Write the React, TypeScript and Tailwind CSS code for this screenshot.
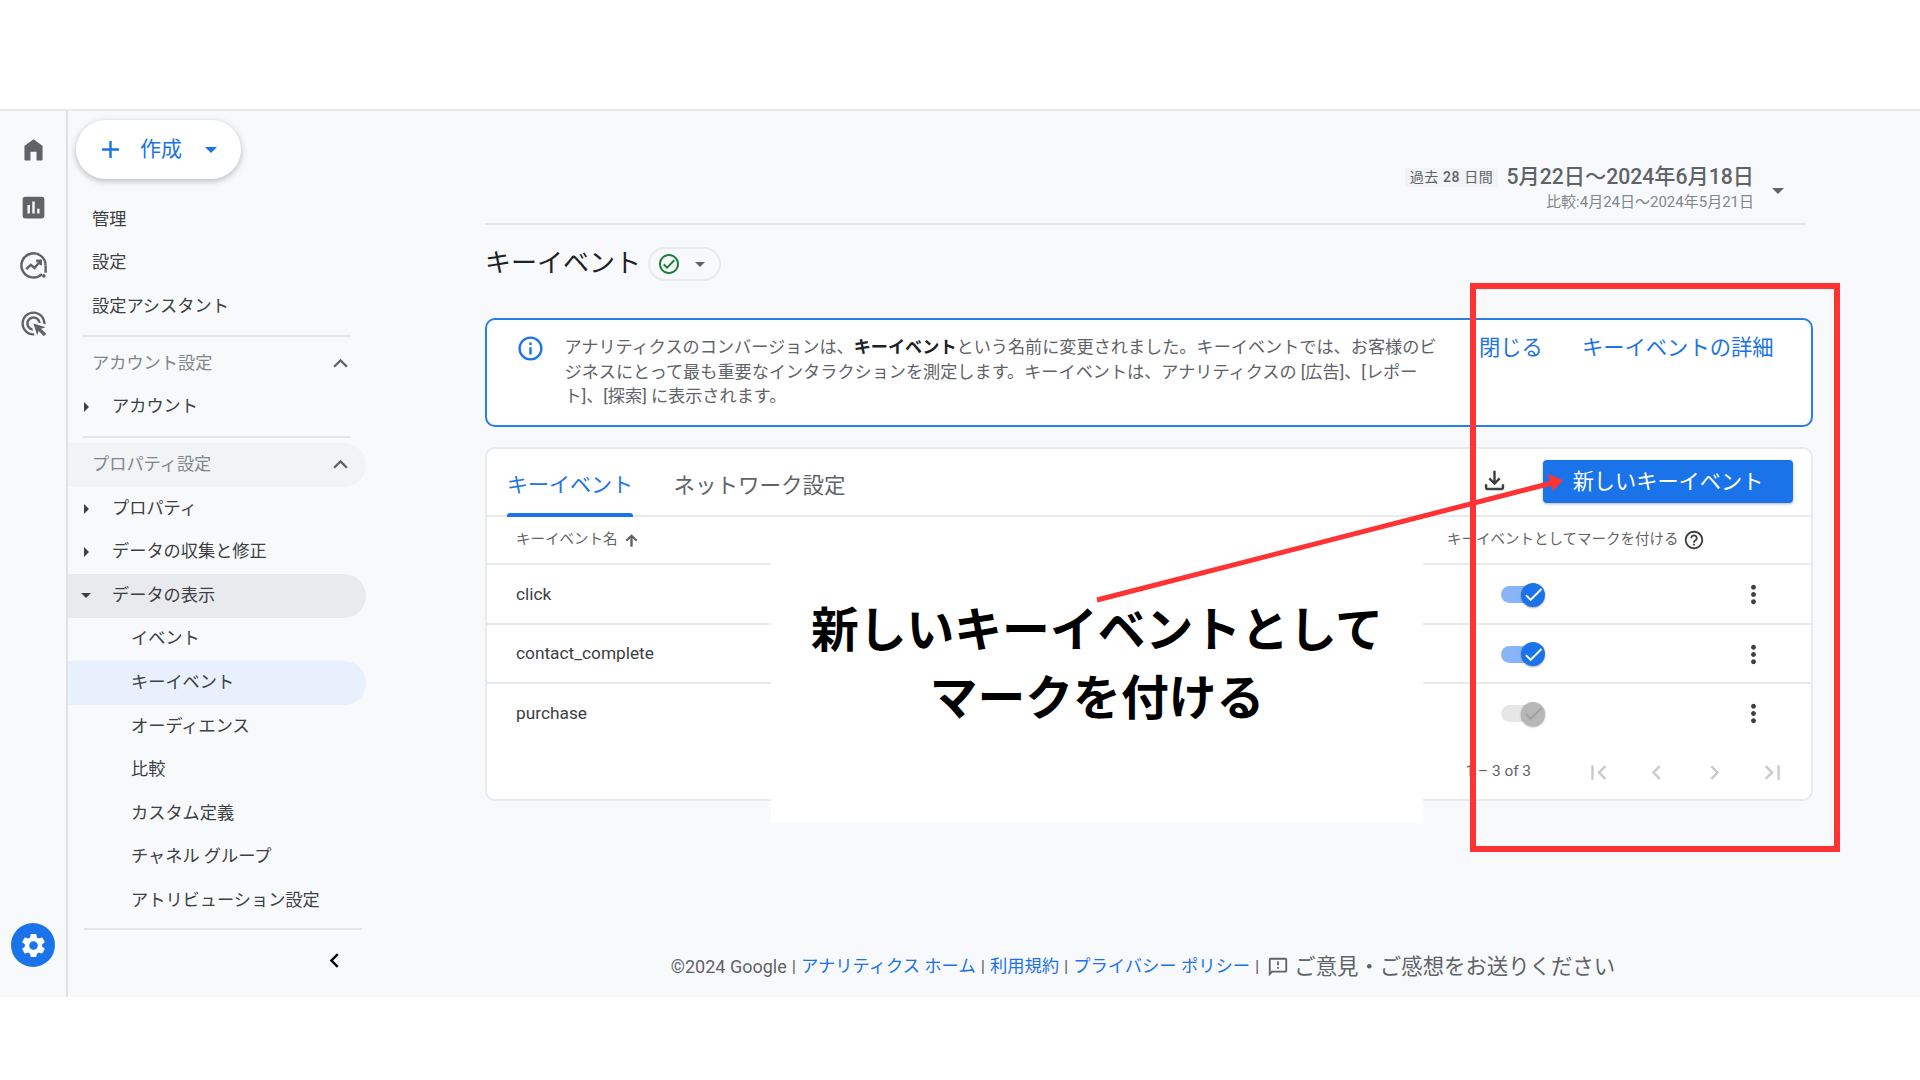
import React from 'react';

const P = {
  home: 'M4.5 20.2V9.4c0-.3.1-.5.4-.7L11.4 3.9c.4-.3.8-.3 1.2 0l6.5 4.8c.3.2.4.4.4.7v10.8c0 .4-.3.8-.8.8h-4.2v-7.2h-5V21H5.3c-.5 0-.8-.4-.8-.8z',
  bars: 'M19 3H5c-1.1 0-2 .9-2 2v14c0 1.1.9 2 2 2h14c1.1 0 2-.9 2-2V5c0-1.1-.9-2-2-2zM9 17H7v-7h2v7zm4 0h-2V7h2v10zm4 0h-2v-4h2v4z',
  ads: 'M11.71 17.99C8.53 17.84 6 15.22 6 12c0-3.31 2.69-6 6-6 3.22 0 5.84 2.53 5.99 5.71l-2.1-.63C15.48 9.31 13.89 8 12 8c-2.21 0-4 1.79-4 4 0 1.89 1.31 3.48 3.08 3.89l.63 2.1zM22 12c0 .3-.01.6-.04.9l-1.97-.59c.01-.1.01-.21.01-.31 0-4.42-3.58-8-8-8s-8 3.58-8 8 3.58 8 8 8c.1 0 .21 0 .31-.01l.59 1.97c-.3.03-.6.04-.9.04-5.52 0-10-4.48-10-10S6.48 2 12 2s10 4.48 10 10zm-3.77 4.26L22 15l-10-3 3 10 1.26-3.77 4.27 4.27 1.98-1.98-4.28-4.26z',
  gear: 'M19.14 12.94c.04-.3.06-.61.06-.94 0-.32-.02-.64-.07-.94l2.03-1.58c.18-.14.23-.41.12-.61l-1.92-3.32c-.12-.22-.37-.29-.59-.22l-2.39.96c-.5-.38-1.03-.7-1.62-.94l-.36-2.54c-.04-.24-.24-.41-.48-.41h-3.84c-.24 0-.43.17-.47.41l-.36 2.54c-.59.24-1.13.57-1.62.94l-2.39-.96c-.22-.08-.47 0-.59.22L2.74 8.87c-.12.21-.08.47.12.61l2.03 1.58c-.05.3-.09.63-.09.94s.02.64.07.94l-2.03 1.58c-.18.14-.23.41-.12.61l1.92 3.32c.12.22.37.29.59.22l2.39-.96c.5.38 1.03.7 1.62.94l.36 2.54c.05.24.24.41.48.41h3.84c.24 0 .44-.17.47-.41l.36-2.54c.59-.24 1.13-.56 1.62-.94l2.39.96c.22.08.47 0 .59-.22l1.92-3.32c.12-.22.07-.47-.12-.61l-2.01-1.58zM12 15.6c-1.98 0-3.6-1.62-3.6-3.6s1.62-3.6 3.6-3.6 3.6 1.62 3.6 3.6-1.62 3.6-3.6 3.6z',
  plus: 'M19 13h-6v6h-2v-6H5v-2h6V5h2v6h6v2z',
  up: 'M7.41 15.41L12 10.83l4.59 4.58L18 14l-6-6-6 6z',
  left: 'M15.41 7.41L14 6l-6 6 6 6 1.41-1.41L10.83 12z',
  right: 'M10 6L8.59 7.41 13.17 12l-4.58 4.59L10 18l6-6z',
  first: 'M18.41 16.59L13.82 12l4.59-4.59L17 6l-6 6 6 6zM6 6h2v12H6z',
  last: 'M5.59 7.41L10.18 12l-4.59 4.59L7 18l6-6-6-6zM16 6h2v12h-2z',
  download: 'M18 15v3H6v-3H4v3c0 1.1.9 2 2 2h12c1.1 0 2-.9 2-2v-3h-2zm-1-4l-1.41-1.41L13 12.17V4h-2v8.17L8.41 9.59 7 11l5 5 5-5z',
  help: 'M11 18h2v-2h-2v2zm1-16C6.48 2 2 6.48 2 12s4.48 10 10 10 10-4.48 10-10S17.52 2 12 2zm0 18c-4.41 0-8-3.59-8-8s3.59-8 8-8 8 3.59 8 8-3.59 8-8 8zm0-14c-2.21 0-4 1.79-4 4h2c0-1.1.9-2 2-2s2 .9 2 2c0 2-3 1.75-3 5h2c0-2.25 3-2.5 3-5 0-2.21-1.79-4-4-4z',
  info: 'M11 7h2v2h-2zm0 4h2v6h-2zm1-9C6.48 2 2 6.48 2 12s4.48 10 10 10 10-4.48 10-10S17.52 2 12 2zm0 18c-4.41 0-8-3.59-8-8s3.59-8 8-8 8 3.59 8 8-3.59 8-8 8z',
  okCircle: 'M12 2C6.48 2 2 6.48 2 12s4.48 10 10 10 10-4.48 10-10S17.52 2 12 2zm0 18c-4.41 0-8-3.59-8-8s3.59-8 8-8 8 3.59 8 8-3.59 8-8 8zm4.59-12.42L10 14.17l-2.59-2.58L6 13l4 4 8-8z',
  feedback: 'M20 2H4c-1.1 0-1.99.9-1.99 2L2 22l4-4h14c1.1 0 2-.9 2-2V4c0-1.1-.9-2-2-2zm0 14H5.17L4 17.17V4h16v12zM11 12h2v2h-2zm0-6h2v4h-2z',
  dots: 'M12 8c1.1 0 2-.9 2-2s-.9-2-2-2-2 .9-2 2 .9 2 2 2zm0 2c-1.1 0-2 .9-2 2s.9 2 2 2 2-.9 2-2-.9-2-2-2zm0 6c-1.1 0-2 .9-2 2s.9 2 2 2 2-.9 2-2-.9-2-2-2z',
  arrowUp: 'M12 4l-7.5 7.5 1.8 1.8 4.2-4.2V20h3V9.1l4.2 4.2 1.8-1.8z',
  check: 'M9 16.17L4.83 12l-1.42 1.41L9 19 21 7l-1.41-1.41z',
};

function cn(...parts: (string | false | undefined)[]) {
  return parts.filter(Boolean).join(' ');
}

function Icon({ d, className }: { d: string; className?: string }) {
  return (
    <svg viewBox="0 0 24 24" fill="currentColor" className={className}>
      <path d={d} />
    </svg>
  );
}

function InsightsIcon({ className }: { className?: string }) {
  return (
    <svg viewBox="0 0 24 24" fill="none" stroke="currentColor" strokeWidth="2" className={className}>
      <path d="M19 19.1A10 10 0 1 1 22 12" />
      <path d="M22 12v6" />
      <path d="M6 15l3.8-3.6 3 2.6 5-6M14.2 8H18v3.8" />
      <circle cx="20.6" cy="20.6" r="1.5" fill="currentColor" stroke="none" />
    </svg>
  );
}

function RailIcon({ children }: { children: React.ReactNode }) {
  return <div className="h-[58px] flex items-center justify-center text-[#5f6368]">{children}</div>;
}

function NavRow({ label, indent = 0, arrow, muted, chevron, tone }: {
  label: string;
  indent?: 0 | 1 | 2;
  arrow?: 'right' | 'down';
  muted?: boolean;
  chevron?: boolean;
  tone?: 'grey' | 'soft' | 'blue';
}) {
  return (
    <div
      className={cn(
        'h-[43.6px] flex items-center relative rounded-r-full text-[17.2px] text-[#3c4043]',
        indent === 0 && 'pl-[24px]',
        indent === 1 && 'pl-[44px]',
        indent === 2 && 'pl-[63px]',
        muted && 'text-[#80868b]',
        tone === 'grey' && 'bg-[#e8eaed]',
        tone === 'soft' && 'bg-[#f1f3f4]',
        tone === 'blue' && 'bg-[#e8f0fe] text-[#1a73e8]',
      )}
    >
      {arrow === 'right' && <span className="absolute left-[16px] w-0 h-0 border-y-[5px] border-y-transparent border-l-[5px] border-l-[#3c4043]" />}
      {arrow === 'down' && <span className="absolute left-[13px] w-0 h-0 border-x-[5px] border-x-transparent border-t-[5px] border-t-[#3c4043]" />}
      <span>{label}</span>
      {chevron && <Icon d={P.up} className="absolute left-[258px] w-[29px] h-[29px] text-[#5f6368]" />}
    </div>
  );
}

function Toggle({ off }: { off?: boolean }) {
  return (
    <div className="relative w-[44px] h-[24px] flex items-center">
      <div className={cn('w-[36px] h-[17px] rounded-full', off ? 'bg-[#e6e6e6]' : 'bg-[#8ab4f8]')} />
      <div
        className={cn(
          'absolute right-0 top-0 w-[24px] h-[24px] rounded-full flex items-center justify-center shadow-[0_1px_2px_rgba(0,0,0,0.35)]',
          off ? 'bg-[#b7b7b7]' : 'bg-[#1a73e8]',
        )}
      >
        <Icon d={P.check} className={cn('w-[23px] h-[23px]', off ? 'text-[#a0a0a0]' : 'text-white')} />
      </div>
    </div>
  );
}

function TableRow({ name, off, last }: { name: string; off?: boolean; last?: boolean }) {
  return (
    <div className={cn('h-[59.5px] grid grid-cols-[985px_238px_auto] items-center pl-[29px] text-[17.3px] text-[#3c4043]', !last && 'border-b-2 border-[#e8eaed] pt-[2px]')}>
      <span>{name}</span>
      <Toggle off={off} />
      <Icon d={P.dots} className="w-[29px] h-[29px] text-[#3c4043]" />
    </div>
  );
}

export default function App() {
  return (
    <div className="relative w-[1920px] h-[1080px] bg-white overflow-hidden font-['Roboto','Noto_Sans_CJK_JP',sans-serif]">
      <div className="h-[111px] bg-white border-b-2 border-[#e6e8ea]" />
      <div className="h-[886px] flex bg-[#f8f9fb]">
        {/* Icon rail */}
        <aside className="w-[68px] shrink-0 border-r-2 border-[#dfe1e5] flex flex-col items-center pt-[9px] pb-[30px]">
          <RailIcon><Icon d={P.home} className="w-[29px] h-[29px]" /></RailIcon>
          <RailIcon><Icon d={P.bars} className="w-[29px] h-[29px]" /></RailIcon>
          <RailIcon><InsightsIcon className="w-[29px] h-[29px]" /></RailIcon>
          <RailIcon><Icon d={P.ads} className="w-[29px] h-[29px]" /></RailIcon>
          <div className="mt-auto w-[44px] h-[44px] rounded-full bg-[#1a73e8] flex items-center justify-center">
            <Icon d={P.gear} className="w-[29px] h-[29px] text-white" />
          </div>
        </aside>

        {/* Nav */}
        <nav className="w-[298px] shrink-0 pt-[9px]">
          <button className="ml-[8px] w-[165px] h-[59px] rounded-full bg-white shadow-[0_2px_6px_rgba(60,64,67,0.35)] flex items-center pl-[23px] text-[21px] text-[#1a73e8]">
            <Icon d={P.plus} className="w-[29px] h-[29px] -ml-[3px]" />
            <span className="ml-[15px]">作成</span>
            <span className="ml-[23px] w-0 h-0 border-x-[6px] border-x-transparent border-t-[6px] border-t-[#1a73e8]" />
          </button>
          <div className="mt-[19px]">
            <NavRow label="管理" />
            <NavRow label="設定" />
            <NavRow label="設定アシスタント" />
          </div>
          <div className="mt-[6px] mb-[5.2px] ml-[15px] w-[268px] h-[2px] bg-[#e3e5e8]" />
          <NavRow label="アカウント設定" muted chevron />
          <NavRow label="アカウント" indent={1} arrow="right" />
          <div className="mt-[7px] mb-[5px] ml-[15px] w-[268px] h-[2px] bg-[#e3e5e8]" />
          <NavRow label="プロパティ設定" muted chevron tone="soft" />
          <NavRow label="プロパティ" indent={1} arrow="right" />
          <NavRow label="データの収集と修正" indent={1} arrow="right" />
          <NavRow label="データの表示" indent={1} arrow="down" tone="grey" />
          <NavRow label="イベント" indent={2} />
          <NavRow label="キーイベント" indent={2} tone="blue" />
          <NavRow label="オーディエンス" indent={2} />
          <NavRow label="比較" indent={2} />
          <NavRow label="カスタム定義" indent={2} />
          <NavRow label="チャネル グループ" indent={2} />
          <NavRow label="アトリビューション設定" indent={2} />
          <div className="mt-[5px] ml-[16px] w-[278px] h-[2px] bg-[#e3e5e8]" />
          <div className="pl-[254px] mt-[16.5px]">
            <Icon d={P.left} className="w-[29px] h-[29px] -ml-[2px] text-black" />
          </div>
        </nav>

        {/* Main */}
        <main className="flex-1 pl-[119px] flex flex-col">
          <div className="w-[1328px] pt-[53px]">
            <div className="w-[1320px] h-[61px] border-b-2 border-[#e3e5e8] flex justify-end pr-[21px]">
              <div className="flex flex-col items-end pt-[1px]">
                <div className="flex items-center h-[24px]">
                  <span className="h-[19px] px-[5px] bg-[#f1f3f4] text-[14px] leading-[19px] text-[#5f6368] tracking-[0.6px]">過去 <b className="font-medium">28</b> 日間</span>
                  <span className="ml-[8px] text-[21.2px] font-medium text-[#5f6368]">5月22日～2024年6月18日</span>
                </div>
                <span className="mt-[2px] text-[15px] text-[#80868b]">比較:4月24日～2024年5月21日</span>
              </div>
              <span className="ml-[18px] mt-[24px] w-0 h-0 border-x-[6px] border-x-transparent border-t-[6px] border-t-[#5f6368]" />
            </div>

            <div className="mt-[22px] flex items-center h-[34px]">
              <h1 className="pb-[2px] text-[26px] font-normal text-[#202124]">キーイベント</h1>
              <div className="ml-[7px] w-[73px] h-[34px] border-2 border-[#e8eaed] rounded-full flex items-center pl-[7px]">
                <Icon d={P.okCircle} className="w-[24px] h-[24px] text-[#188038]" />
                <span className="ml-[14px] w-0 h-0 border-x-[5px] border-x-transparent border-t-[5px] border-t-[#5f6368]" />
              </div>
            </div>

            {/* Banner */}
            <div className="mt-[37px] h-[109px] bg-white border-2 border-[#2a7de9] rounded-[10px] flex pt-[15px] pl-[28.5px]">
              <Icon d={P.info} className="w-[29px] h-[29px] mt-[-1px] text-[#1a73e8]" />
              <p className="ml-[20px] text-[17.15px] leading-[24.5px] text-[#5f6368] whitespace-nowrap w-[914.5px]">
                アナリティクスのコンバージョンは、<b className="font-bold text-[#202124]">キーイベント</b>という名前に変更されました。キーイベントでは、お客様のビ<br />
                ジネスにとって最も重要なインタラクションを測定します。キーイベントは、アナリティクスの [広告]、[レポー<br />
                ト]、[探索] に表示されます。
              </p>
              <span className="text-[21.3px] leading-[26px] text-[#1a73e8]">閉じる</span>
              <span className="ml-[39px] text-[21.3px] leading-[26px] text-[#1a73e8]">キーイベントの詳細</span>
            </div>

            {/* Card */}
            <div className="mt-[20px] h-[354px] bg-white border-2 border-[#e8eaed] rounded-[10px]">
              <div className="h-[68px] border-b-2 border-[#e8eaed] flex items-end pl-[20px] pr-[18px]">
                <div className="relative h-full flex items-center pt-[8px] text-[21px] text-[#1a73e8]">
                  キーイベント
                  <span className="absolute left-0 right-0 -bottom-[2px] h-[4px] bg-[#1a73e8] rounded-t-[3px]" />
                </div>
                <div className="ml-[40.5px] h-full flex items-center pt-[8px] text-[21.5px] text-[#5f6368]">ネットワーク設定</div>
                <Icon d={P.download} className="ml-auto mb-[20px] w-[29px] h-[29px] text-[#3c4043]" />
                <button className="ml-[34px] mb-[12px] w-[250px] h-[43px] rounded-[4px] bg-[#1a73e8] shadow-[0_1px_3px_rgba(60,64,67,0.4)] text-[21.2px] text-white">新しいキーイベント</button>
              </div>
              <div className="h-[48px] border-b-2 border-[#e8eaed] flex items-center pl-[29px] text-[14.5px] text-[#5f6368]">
                <span>キーイベント名</span>
                <Icon d={P.arrowUp} className="ml-[4px] w-[19px] h-[19px]" />
                <span className="ml-auto">キーイベントとしてマークを付ける</span>
                <Icon d={P.help} className="ml-[4px] mr-[106.4px] w-[22px] h-[22px] text-[#3c4043]" />
              </div>
              <TableRow name="click" />
              <TableRow name="contact_complete" />
              <TableRow name="purchase" off last />
              <div className="h-[57px] flex items-center justify-end pr-[10px]">
                <span className="mr-[38px] text-[15.4px] text-[#5f6368]">1 – 3 of 3</span>
                {[P.first, P.left, P.right, P.last].map(d => (
                  <div key={d} className="w-[58px] flex justify-center">
                    <Icon d={d} className="w-[29px] h-[29px] text-[#c8cacd]" />
                  </div>
                ))}
              </div>
            </div>
          </div>

          <footer className="mt-[150px] -ml-[119px] flex items-center justify-center text-[17.3px] text-[#5f6368]">
            <span className="pb-[2px] text-[18px]">©2024 Google</span>
            <span className="mx-[5px]">|</span>
            <span className="text-[#1a73e8]">アナリティクス ホーム</span>
            <span className="mx-[5px]">|</span>
            <span className="text-[#1a73e8]">利用規約</span>
            <span className="mx-[5px]">|</span>
            <span className="text-[#1a73e8]">プライバシー ポリシー</span>
            <span className="ml-[5px]">|</span>
            <Icon d={P.feedback} className="ml-[8px] w-[22px] h-[22px] text-[#5f6368]" />
            <span className="ml-[5px] text-[21.4px]">ご意見・ご感想をお送りください</span>
          </footer>
        </main>
      </div>

      {/* Annotation overlay */}
      <div className="absolute left-[771px] top-[517px] w-[652px] h-[306px] bg-white flex flex-col items-center justify-center pb-[18px] text-[47.8px] leading-[68px] font-bold text-black font-['Noto_Sans_CJK_JP',sans-serif]">
        <span>新しいキーイベントとして</span>
        <span>マークを付ける</span>
      </div>
      <svg viewBox="0 0 1920 1080" className="absolute inset-0 w-[1920px] h-[1080px] pointer-events-none">
        <line x1="1097" y1="600" x2="1552" y2="483" stroke="#ff3333" strokeWidth="5" />
        <polygon points="1563,480 1548,474 1553,491" fill="#ff3333" />
      </svg>
      <div className="absolute left-[1470px] top-[283px] w-[370px] h-[569px] border-[6px] border-[#ff3333]" />
    </div>
  );
}
